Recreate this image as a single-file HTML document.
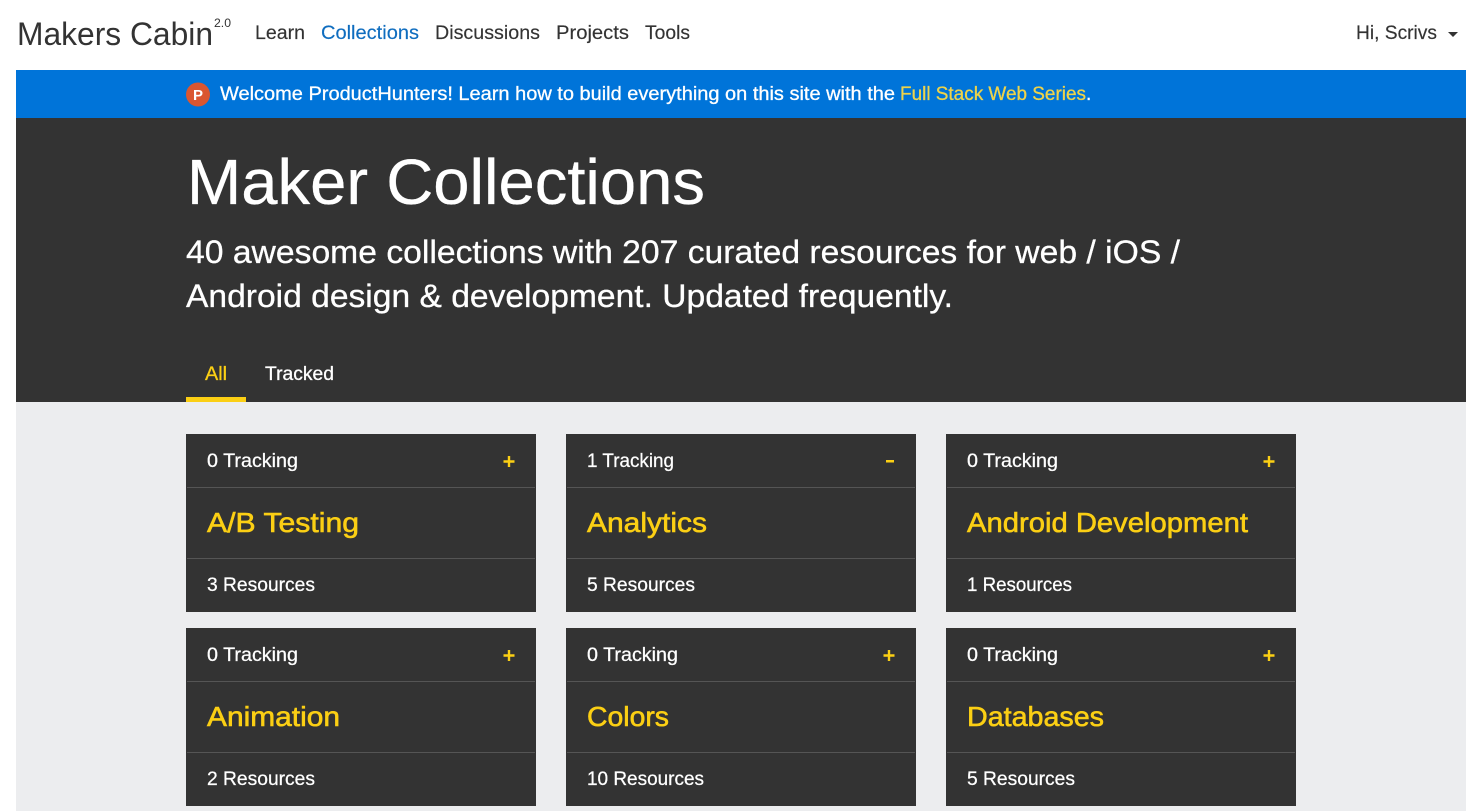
<!DOCTYPE html>
<html lang="en">
<head>
<meta charset="utf-8">
<title>Maker Collections</title>
<style>
html,body{margin:0;padding:0;background:#fff;width:1480px;height:811px;overflow:hidden}
svg{display:block}
text{font-family:"Liberation Sans",sans-serif}
.n{fill:#333;font-size:19px;stroke:#333;stroke-width:.15px}
.w{fill:#fff;stroke:#fff;stroke-width:.3px}
.y{fill:#fbcf14;stroke:#fbcf14;stroke-width:.3px}
.s{fill:#fff;font-size:19px;stroke:#fff;stroke-width:.25px}
.t{fill:#fbcf14;font-size:28px;stroke:#fbcf14;stroke-width:.6px}
.p{stroke:#fbcf14;stroke-width:2.4px;fill:none}
</style>
</head>
<body>
<svg width="1480" height="811" viewBox="0 0 1480 811" xmlns="http://www.w3.org/2000/svg">
<rect width="1480" height="811" fill="#fff"/>
<text x="17" y="45" font-size="32" fill="#333" textLength="196" lengthAdjust="spacingAndGlyphs">Makers Cabin</text>
<text x="214" y="27" font-size="12" fill="#333" textLength="17" lengthAdjust="spacingAndGlyphs">2.0</text>
<text class="n" x="255" y="39" textLength="50" lengthAdjust="spacingAndGlyphs">Learn</text>
<text class="n" x="321" y="39" textLength="98" lengthAdjust="spacingAndGlyphs" style="fill:#0f6dbf;stroke:#0f6dbf">Collections</text>
<text class="n" x="435" y="39" textLength="105" lengthAdjust="spacingAndGlyphs">Discussions</text>
<text class="n" x="556" y="39" textLength="73" lengthAdjust="spacingAndGlyphs">Projects</text>
<text class="n" x="645" y="39" textLength="45" lengthAdjust="spacingAndGlyphs">Tools</text>
<text class="n" x="1356" y="39" textLength="81" lengthAdjust="spacingAndGlyphs">Hi, Scrivs</text>
<path d="M1448 32h10l-5 5z" fill="#333"/>

<rect x="16" y="70" width="1450" height="48" fill="#0074d9"/>
<circle cx="198" cy="94.500" r="12" fill="#da5630"/>
<text x="198" y="100" font-size="15" font-weight="bold" fill="#fff" text-anchor="middle">P</text>
<text x="220" y="100" font-size="19" class="w" textLength="675" lengthAdjust="spacingAndGlyphs">Welcome ProductHunters! Learn how to build everything on this site with the</text>
<text x="900" y="100" font-size="19" textLength="186" lengthAdjust="spacingAndGlyphs" style="fill:#eed34a;stroke:#eed34a;stroke-width:.3px">Full Stack Web Series</text>
<text x="1086" y="100" font-size="19" class="w">.</text>

<rect x="16" y="118" width="1450" height="284" fill="#333"/>
<rect x="16" y="402" width="1450" height="409" fill="#ecedef"/>
<text x="187" y="204" font-size="64" class="w" textLength="518" lengthAdjust="spacingAndGlyphs">Maker Collections</text>
<text x="186" y="263" font-size="32" class="w" textLength="994" lengthAdjust="spacingAndGlyphs">40 awesome collections with 207 curated resources for web / iOS /</text>
<text x="186" y="307" font-size="32" class="w" textLength="767" lengthAdjust="spacingAndGlyphs">Android design &amp; development. Updated frequently.</text>
<text x="205" y="380" font-size="19" class="y" textLength="22" lengthAdjust="spacingAndGlyphs">All</text>
<text x="265" y="380" font-size="19" class="w" textLength="69" lengthAdjust="spacingAndGlyphs">Tracked</text>
<rect x="186" y="397" width="60" height="5" fill="#fbcf14"/>

<!-- Row 1 -->
<g>
<rect x="186" y="434" width="350" height="178" fill="#333"/>
<rect x="187" y="487" width="348" height="1" fill="#555"/>
<rect x="187" y="558" width="348" height="1" fill="#555"/>
<text class="s" x="207" y="467" textLength="91" lengthAdjust="spacingAndGlyphs">0 Tracking</text>
<path class="p" d="M503.500 461.500h11M509 456v11"/>
<text class="t" x="207" y="532" textLength="152" lengthAdjust="spacingAndGlyphs">A/B Testing</text>
<text class="s" x="207" y="591" textLength="108" lengthAdjust="spacingAndGlyphs">3 Resources</text>
</g>
<g>
<rect x="566" y="434" width="350" height="178" fill="#333"/>
<rect x="567" y="487" width="348" height="1" fill="#555"/>
<rect x="567" y="558" width="348" height="1" fill="#555"/>
<text class="s" x="587" y="467" textLength="87" lengthAdjust="spacingAndGlyphs">1 Tracking</text>
<rect x="886" y="460" width="8" height="2.500" fill="#fbcf14"/>
<text class="t" x="587" y="532" textLength="120" lengthAdjust="spacingAndGlyphs">Analytics</text>
<text class="s" x="587" y="591" textLength="108" lengthAdjust="spacingAndGlyphs">5 Resources</text>
</g>
<g>
<rect x="946" y="434" width="350" height="178" fill="#333"/>
<rect x="947" y="487" width="348" height="1" fill="#555"/>
<rect x="947" y="558" width="348" height="1" fill="#555"/>
<text class="s" x="967" y="467" textLength="91" lengthAdjust="spacingAndGlyphs">0 Tracking</text>
<path class="p" d="M1263.500 461.500h11M1269 456v11"/>
<text class="t" x="967" y="532" textLength="281" lengthAdjust="spacingAndGlyphs">Android Development</text>
<text class="s" x="967" y="591" textLength="105" lengthAdjust="spacingAndGlyphs">1 Resources</text>
</g>

<!-- Row 2 -->
<g>
<rect x="186" y="628" width="350" height="178" fill="#333"/>
<rect x="187" y="681" width="348" height="1" fill="#555"/>
<rect x="187" y="752" width="348" height="1" fill="#555"/>
<text class="s" x="207" y="661" textLength="91" lengthAdjust="spacingAndGlyphs">0 Tracking</text>
<path class="p" d="M503.500 655.500h11M509 650v11"/>
<text class="t" x="207" y="726" textLength="133" lengthAdjust="spacingAndGlyphs">Animation</text>
<text class="s" x="207" y="785" textLength="108" lengthAdjust="spacingAndGlyphs">2 Resources</text>
</g>
<g>
<rect x="566" y="628" width="350" height="178" fill="#333"/>
<rect x="567" y="681" width="348" height="1" fill="#555"/>
<rect x="567" y="752" width="348" height="1" fill="#555"/>
<text class="s" x="587" y="661" textLength="91" lengthAdjust="spacingAndGlyphs">0 Tracking</text>
<path class="p" d="M883.500 655.500h11M889 650v11"/>
<text class="t" x="587" y="726" textLength="82" lengthAdjust="spacingAndGlyphs">Colors</text>
<text class="s" x="587" y="785" textLength="117" lengthAdjust="spacingAndGlyphs">10 Resources</text>
</g>
<g>
<rect x="946" y="628" width="350" height="178" fill="#333"/>
<rect x="947" y="681" width="348" height="1" fill="#555"/>
<rect x="947" y="752" width="348" height="1" fill="#555"/>
<text class="s" x="967" y="661" textLength="91" lengthAdjust="spacingAndGlyphs">0 Tracking</text>
<path class="p" d="M1263.500 655.500h11M1269 650v11"/>
<text class="t" x="967" y="726" textLength="137" lengthAdjust="spacingAndGlyphs">Databases</text>
<text class="s" x="967" y="785" textLength="108" lengthAdjust="spacingAndGlyphs">5 Resources</text>
</g>
</svg>
</body>
</html>
